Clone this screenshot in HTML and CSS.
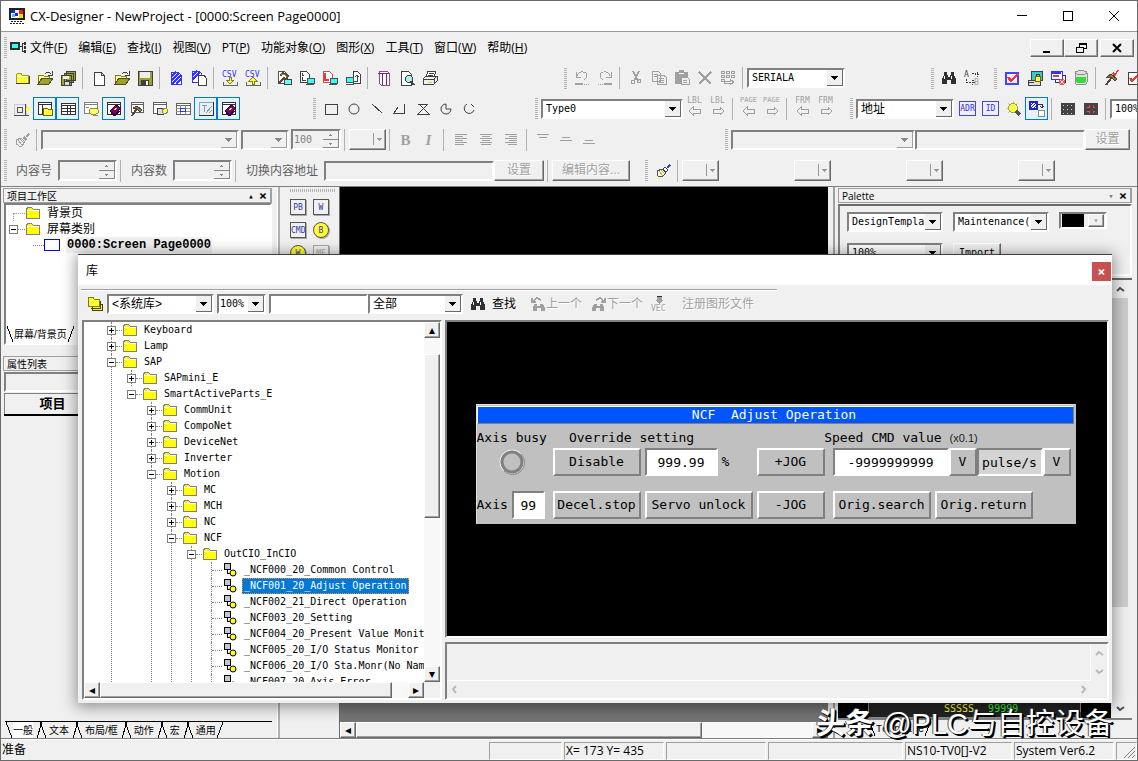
FILE: index.html
```html
<!DOCTYPE html>
<html lang="zh-CN">
<head>
<meta charset="utf-8">
<title>CX-Designer - NewProject</title>
<link rel="stylesheet" href="styles.css">
</head>
<body>
<svg class="defs" aria-hidden="true">
  <symbol id="folder" viewBox="0 0 16 16"><path d="M2 13V5l2-2h3l1 2h6v8z" fill="#ff3" stroke="#999933"/><path d="M3 6h10" stroke="#fff"/><path d="M2 13.500h13V6" fill="none" stroke="#404040"/></symbol>
  <symbol id="open" viewBox="0 0 16 16"><path d="M1 13V5h5l1 1h5v2" fill="#ff9" stroke="#808020"/><path d="M1 14l4-6h11l-4 6z" fill="#a0a030" stroke="#505010"/><path d="M8 4l2-2h2l2 2M15 1v4h-4" fill="none" stroke="#404040"/></symbol>
  <symbol id="saveall" viewBox="0 0 16 16"><path d="M6 1h9v9h-9zM4 3h9v9h-9zM1 5h10v10H1z" fill="#a0a030" stroke="#404040"/><path d="M3 6h6v3H3z" fill="#eee"/><path d="M4 11h5v4H4z" fill="#ddd" stroke="#404040"/></symbol>
  <symbol id="new" viewBox="0 0 16 16"><path d="M3 2h7l3 3v10H3z" fill="#fff" stroke="#404040"/><path d="M10 2v3h3" fill="none" stroke="#404040"/></symbol>
  <symbol id="save" viewBox="0 0 16 16"><path d="M1 1h14v14H1z" fill="#a0a030" stroke="#404040"/><path d="M3 2h10v6H3z" fill="#eee"/><path d="M4 10h8v5H4z" fill="#404040"/><path d="M9 11h2v4H9z" fill="#fff"/></symbol>
  <symbol id="hatch" viewBox="0 0 16 16"><path d="M3 2h7l3 3v9H3z" fill="#fff" stroke="#33f"/><path d="M3 7l5-5M3 11l8-8M4 14l9-9M8 14l5-5" stroke="#33f" stroke-width="1.500"/></symbol>
  <symbol id="hatch2" viewBox="0 0 16 16"><path d="M1 1h7l2 2v9H1z" fill="#fff" stroke="#33f"/><path d="M1 6l5-5M1 10l8-8" stroke="#33f" stroke-width="1.500"/><path d="M7 5h6l2 3v7H7z" fill="#fff" stroke="#404040"/></symbol>
  <symbol id="csvin" viewBox="0 0 16 16"><text x="0" y="7" class="glyph">CSV</text><path d="M7 7h2v3h3l-4 4-4-4h3z" fill="#ff3" stroke="#808020"/><path d="M1 12v3h14v-3" fill="none" stroke="#666"/></symbol>
  <symbol id="csvout" viewBox="0 0 16 16"><text x="0" y="7" class="glyph">CSV</text><path d="M7 14h2v-3h3L8 7l-4 4h3z" fill="#ff3" stroke="#808020"/><path d="M1 12v3h14v-3" fill="none" stroke="#666"/></symbol>
  <symbol id="hammer" viewBox="0 0 16 16"><path d="M2 1h6l3 3v9H2z" fill="#fff" stroke="#505050"/><path d="M8 9h7v5H8z" fill="#6ff" stroke="#404040"/><path d="M4 6l3-3 5 3-2 3-2-1-6 6" fill="none" stroke="#604828" stroke-width="2"/><path d="M5 5l3-1 3 3" fill="none" stroke="#909040"/></symbol>
  <symbol id="trans" viewBox="0 0 16 16"><path d="M1 1h6l3 3v8H1z" fill="#fff" stroke="#404040"/><path d="M3 3v2h2M3 7v3h4" stroke="#404040" fill="none"/><path d="M8 8h7v5H8z" fill="#3ff" stroke="#505050"/><path d="M7 14h8" stroke="#505050"/></symbol>
  <symbol id="transred" viewBox="0 0 16 16"><path d="M1 1h6l3 3v8H1z" fill="#fff" stroke="#c05050"/><path d="M3 3v7h4" stroke="#f33" stroke-width="2" fill="none"/><path d="M8 8h7v5H8z" fill="#3ff" stroke="#505050"/><path d="M7 14h8" stroke="#505050"/></symbol>
  <symbol id="transup" viewBox="0 0 16 16"><path d="M8 1h4l3 3v9H8z" fill="#fff" stroke="#404040"/><path d="M9 11h3V5M10 7l2-2 2 2" stroke="#404040" fill="none"/><path d="M1 7h7v5H1z" fill="#3ff" stroke="#505050"/><path d="M1 14h8" stroke="#505050"/></symbol>
  <symbol id="book" viewBox="0 0 16 16"><path d="M3 3V1h8l2 2v12H5l-2-2z" fill="#fff" stroke="#a040a0"/><path d="M6 3v12M10 3v12M2 3h11" stroke="#703070" fill="none"/></symbol>
  <symbol id="preview" viewBox="0 0 16 16"><path d="M2 1h7l3 3v11H2z" fill="#fff" stroke="#404040"/><circle cx="10" cy="9" r="3.500" fill="#aee" stroke="#404040"/><path d="M12 11l3 4" stroke="#404040" stroke-width="2"/></symbol>
  <symbol id="print" viewBox="0 0 16 16"><path d="M4 7l2-6h8l-2 6z" fill="#fff" stroke="#404040"/><path d="M1 9l3-3h11v5l-3 3H1z" fill="#eee" stroke="#404040"/><path d="M7 3h5M6 5h5M1 9h11l3-3M12 9v5" fill="none" stroke="#404040"/><path d="M6 12h4" stroke="#dd0"/></symbol>
  <symbol id="undo" viewBox="0 0 16 16"><path d="M2 2v5h5M3 6c2-6 10-5 10 0 0 2-2 3-3 4" fill="none" stroke="#a0a0a0"/><path d="M1 14h8" stroke="#a0a0a0" stroke-width="2"/><path d="M10 14h5" stroke="#a0a0a0" stroke-dasharray="1 1"/></symbol>
  <symbol id="redo" viewBox="0 0 16 16"><path d="M14 2v5H9M13 6C11 0 3 1 3 6c0 2 2 3 3 4" fill="none" stroke="#a0a0a0"/><path d="M7 14h8" stroke="#a0a0a0" stroke-width="2"/><path d="M1 14h5" stroke="#a0a0a0" stroke-dasharray="1 1"/></symbol>
  <symbol id="cut" viewBox="0 0 16 16"><path d="M5 1l5 10M11 1L6 11" stroke="#a0a0a0" fill="none" stroke-width="1.500"/><circle cx="5" cy="12" r="2" fill="none" stroke="#a0a0a0"/><circle cx="11" cy="11" r="2" fill="none" stroke="#a0a0a0"/></symbol>
  <symbol id="copy" viewBox="0 0 16 16"><path d="M1 1h6l2 2v8H1zM6 5h6l3 2v7H6z" fill="#eee" stroke="#a0a0a0"/><path d="M3 4h4M3 6h3M8 8h5M8 10h5M8 12h5" stroke="#a0a0a0"/></symbol>
  <symbol id="paste" viewBox="0 0 16 16"><path d="M1 2h4V0h5v2h4v12H1z" fill="#a0a0a0"/><path d="M7 7h6l2 2v5H7z" fill="#eee" stroke="#a0a0a0"/><path d="M9 10h4M9 12h4" stroke="#a0a0a0"/><path d="M5 3h5" stroke="#fff"/></symbol>
  <symbol id="del" viewBox="0 0 16 16"><path d="M2 2l12 12M14 2L2 14" stroke="#a0a0a0" stroke-width="2"/></symbol>
  <symbol id="multi" viewBox="0 0 16 16"><path d="M1 1h3v2H1zM6 1h3v2H6zM11 1h3v2h-3zM1 5h3v2H1zM6 5h3v2H6zM11 5h3v2h-3zM1 9h3v2H1z" fill="none" stroke="#a0a0a0"/><path d="M4 11h6V9l4 3-4 3v-2H4z" fill="#eee" stroke="#a0a0a0"/></symbol>
  <symbol id="find" viewBox="0 0 16 16"><path d="M3 2h3v3h1v2h2V5h1V2h3v3l2 4v5h-5v-4H6v4H1V9l2-4z" fill="#303030"/><path d="M4 6L3 9M11 6l-1 3" stroke="#fff"/></symbol>
  <symbol id="replace" viewBox="0 0 16 16"><text x="0" y="7" class="glyph dark">A</text><text x="10" y="15" class="glyph gray">B</text><path d="M8 3h3M13 3v4M11 5l2-3 2 3M2 9v3h8M8 10l3 2-3 3" stroke="#404040" stroke-dasharray="2 1" fill="none"/></symbol>
  <symbol id="check" viewBox="0 0 16 16"><path d="M2 3h12v11H2z" fill="#eef" stroke="#44f" stroke-width="1.500"/><path d="M4 7l3 4 7-7" stroke="#f33" stroke-width="2.500" fill="none"/></symbol>
  <symbol id="lock" viewBox="0 0 16 16"><path d="M4 1h11v9H4z" fill="#3cc" stroke="#404040"/><path d="M1 10h12v5H1z" fill="#ddd" stroke="#404040"/><path d="M8 6h5v5H8z" fill="#ff3" stroke="#806000"/><path d="M9 6V4h3v2M2 12h5" fill="none" stroke="#404040"/></symbol>
  <symbol id="screens" viewBox="0 0 16 16"><path d="M5 5h10v7H5z" fill="#fff" stroke="#336"/><path d="M1 1h11v8H1z" fill="#fff" stroke="#33f"/><path d="M2 3h9" stroke="#33f" stroke-width="2"/><path d="M3 6h6" stroke="#a4a" stroke-width="2"/><circle cx="12" cy="12" r="3" fill="#f44"/><path d="M10 10l4 4M14 10l-4 4" stroke="#fff"/></symbol>
  <symbol id="db" viewBox="0 0 16 16"><path d="M2 3c0-3 12-3 12 0v9c0 4-12 4-12 0z" fill="#ddd" stroke="#909090"/><path d="M3 7h10v5c-2 2-8 2-10 0z" fill="#3d3"/><path d="M2 3c2 2 10 2 12 0" fill="none" stroke="#909090"/></symbol>
  <symbol id="hammercheck" viewBox="0 0 16 16"><path d="M8 7l-6 8" stroke="#604040" stroke-width="2"/><path d="M3 7l4-3 6 5-2 2-4-4z" fill="#808040" stroke="#504030"/><path d="M9 3l2 2 3-5" stroke="#f33" stroke-width="1.500" fill="none"/></symbol>
  <symbol id="pagecheck" viewBox="0 0 16 16"><path d="M1 2h10v12H1z" fill="#fff" stroke="#404040"/><path d="M3 8l2 3 6-6" stroke="#f33" stroke-width="2" fill="none"/></symbol>
  <symbol id="attr" viewBox="0 0 16 16"><path d="M0 3h12v11H0z" fill="#eee" stroke="#ccc"/><path d="M3 6h5v5H3zM11 3v12M0 14h15" fill="none" stroke="#505050"/><circle cx="14" cy="8" r="2" fill="#ff3"/></symbol>
  <symbol id="wfolder" viewBox="0 0 16 16"><path d="M1 1h13v12H1z" fill="#fff" stroke="#303030"/><path d="M1 3h13M5 3v10" stroke="#303030" fill="none"/><path d="M6 14V7h4l1 1h4v6z" fill="#ff3" stroke="#806000"/></symbol>
  <symbol id="wtable" viewBox="0 0 16 16"><path d="M1 2h14v11H1z" fill="#fff" stroke="#303030"/><path d="M1 4h14M1 7h14M1 10h14M7 4v9M10 4v9" stroke="#303030"/></symbol>
  <symbol id="whand" viewBox="0 0 16 16"><path d="M1 1h13v11H1z" fill="#fff" stroke="#808080"/><path d="M1 3h13M3 6h3" stroke="#808080"/><path d="M6 9l2-2h5l2 2v3l-2 1H8l-2-2z" fill="#ff6" stroke="#909040"/><path d="M10 14h5" stroke="#888"/></symbol>
  <symbol id="wbook" viewBox="0 0 16 16"><path d="M1 1h13v12H1z" fill="#fff" stroke="#303030"/><path d="M1 3h13" stroke="#303030"/><path d="M4 10l6-6 5 3-6 7z" fill="#707" stroke="#303"/><path d="M5 12l4 3 6-6" fill="none" stroke="#303"/><path d="M8 9l3-2" stroke="#ff0"/></symbol>
  <symbol id="whammer" viewBox="0 0 16 16"><path d="M2 1h12v10H2z" fill="#fff" stroke="#606060"/><path d="M2 3h12" stroke="#606060"/><path d="M8 7l-5 8" stroke="#604040" stroke-width="2"/><path d="M4 7l4-2 5 4-2 2-3-3z" fill="#808040" stroke="#504030"/></symbol>
  <symbol id="wobj" viewBox="0 0 16 16"><path d="M1 1h13v11H1z" fill="#fff" stroke="#606060"/><path d="M1 3h13" stroke="#606060"/><path d="M5 7h6v6H5z" fill="#ddd" stroke="#404040"/><circle cx="13" cy="10" r="2.500" fill="#ff3" stroke="#888"/></symbol>
  <symbol id="wgrid" viewBox="0 0 16 16"><path d="M1 2h14v11H1z" fill="#fff" stroke="#606060"/><path d="M1 4h14" stroke="#606060"/><path d="M1 7h14M1 10h14M5 4v9M10 4v9" stroke="#909090"/><path d="M5 7h5v3H5z" fill="none" stroke="#33f"/></symbol>
  <symbol id="wdraft" viewBox="0 0 16 16"><path d="M1 1h14v13H1z" fill="#e6f0f8" stroke="#8aa"/><path d="M15 1v13H1" fill="none" stroke="#303030"/><path d="M4 4h5M6 4v7M8 12l6-7M11 12l3-3" stroke="#89a"/></symbol>
  <symbol id="rect" viewBox="0 0 16 16"><path d="M2.500 3.500h12v10h-12z" fill="none" stroke="#404040"/></symbol>
  <symbol id="ellipse" viewBox="0 0 16 16"><circle cx="8" cy="8" r="5" fill="none" stroke="#404040"/></symbol>
  <symbol id="line" viewBox="0 0 16 16"><path d="M3 3l10 9" stroke="#404040"/></symbol>
  <symbol id="polyline" viewBox="0 0 16 16"><path d="M12 3v9H2l4-6" fill="none" stroke="#404040"/></symbol>
  <symbol id="polygon" viewBox="0 0 16 16"><path d="M3 3h10L3 13h11L4 3" fill="none" stroke="#404040"/></symbol>
  <symbol id="sector" viewBox="0 0 16 16"><path d="M8 3v5h5a5 5 0 1 1-5-5z" fill="none" stroke="#404040"/></symbol>
  <symbol id="arc" viewBox="0 0 16 16"><path d="M6 3a5 5 0 1 0 7 6M10 3l3 3" fill="none" stroke="#404040"/></symbol>
  <symbol id="prev" viewBox="0 0 16 16"><path d="M2 10l4-4v2h7v4H6v2z" fill="none" stroke="#a0a0a0"/></symbol>
  <symbol id="next" viewBox="0 0 16 16"><path d="M14 10l-4-4v2H3v4h7v2z" fill="none" stroke="#a0a0a0"/></symbol>
  <symbol id="bulb" viewBox="0 0 16 16"><circle cx="7" cy="7" r="4.500" fill="#ff3" stroke="#999"/><path d="M10 10l4 4" stroke="#505050" stroke-width="3"/><path d="M0 7h2M7 0v2M2 2l1 1M2 12l1-1M12 2l-1 1" stroke="#dd0"/></symbol>
  <symbol id="swap" viewBox="0 0 16 16"><path d="M1 1h7v7H1z" fill="#fff" stroke="#22c" stroke-width="1.500"/><path d="M1 5l4-4M1 8l7-7M4 8l4-4" stroke="#22c"/><path d="M9 3h4v4M11 5l2 2 2-2" stroke="#303030" fill="none"/><path d="M9 9h6v6H9z" fill="#fff" stroke="#888"/></symbol>
  <symbol id="grid" viewBox="0 0 16 16"><path d="M1 2h14v12H1z" fill="#444"/><path d="M3 4h11M3 8h11M3 12h11" stroke="#ccc" stroke-dasharray="1 3"/></symbol>
  <symbol id="snap" viewBox="0 0 16 16"><path d="M1 2h14v12H1z" fill="#444"/><path d="M4 6h2V4M10 4v2h2M4 10h2v2M10 12v-2h2" stroke="#f44" fill="none"/></symbol>
  <symbol id="brush" viewBox="0 0 16 16"><path d="M2 8l5-2 4 4-4 4-4-1z" fill="#fff8c0" stroke="#505050"/><path d="M8 6l2-2 3 3-2 2z" fill="#fff" stroke="#404040"/><path d="M11 4l3-3 2 1-3 4z" fill="#4444aa"/><path d="M4 8l4 5M6 7l4 4" stroke="#aa9"/><path d="M0 15h6" stroke="#ff3" stroke-dasharray="2 1"/></symbol>
  <symbol id="brushoff" viewBox="0 0 16 16"><path d="M2 8l5-2 4 4-4 5-5-3z" fill="#eee" stroke="#a0a0a0"/><path d="M8 6l2-2 3 3-2 2zM11 4l3-3 2 1-3 4z" fill="#a0a0a0"/><path d="M4 8l4 5M6 7l4 4" stroke="#a0a0a0"/></symbol>
  <symbol id="alignl" viewBox="0 0 16 16"><path d="M2 2.500h12M2 4.500h8M2 6.500h12M2 8.500h8M2 10.500h12M2 12.500h9" stroke="#a0a0a0"/></symbol>
  <symbol id="alignc" viewBox="0 0 16 16"><path d="M2 2.500h12M4 4.500h8M2 6.500h12M4 8.500h8M2 10.500h12M3 12.500h10" stroke="#a0a0a0"/></symbol>
  <symbol id="alignr" viewBox="0 0 16 16"><path d="M2 2.500h12M6 4.500h8M2 6.500h12M6 8.500h8M2 10.500h12M5 12.500h9" stroke="#a0a0a0"/></symbol>
  <symbol id="aligntop" viewBox="0 0 16 16"><path d="M2 2.500h12M4 5.500h8" stroke="#a0a0a0"/></symbol>
  <symbol id="alignmid" viewBox="0 0 16 16"><path d="M4 5.500h8M2 8.500h12" stroke="#a0a0a0"/></symbol>
  <symbol id="alignbot" viewBox="0 0 16 16"><path d="M4 8.500h8M2 11.500h12" stroke="#a0a0a0"/></symbol>
  <symbol id="treefolder" viewBox="0 0 16 16"><path d="M1.500 13.500v-9l1-2h4l2 2h6v9z" fill="#ff0" stroke="#808080"/><path d="M2 5.500h12" stroke="#fff"/></symbol>
  <symbol id="plus" viewBox="0 0 9 9"><path d="M.5.5h8v8h-8z" fill="#fff" stroke="#808080"/><path d="M2 4.500h5M4.500 2v5" stroke="#000"/></symbol>
  <symbol id="minus" viewBox="0 0 9 9"><path d="M.5.5h8v8h-8z" fill="#fff" stroke="#808080"/><path d="M2 4.500h5" stroke="#000"/></symbol>
  <symbol id="part" viewBox="0 0 16 16"><path d="M2.500 1.500h6v6h-6z" fill="#c8c8c8" stroke="#000"/><path d="M5.500 8v3.500h3" fill="none" stroke="#000"/><circle cx="11" cy="11" r="3" fill="#ff0" stroke="#000" shape-rendering="auto"/></symbol>
  <symbol id="page" viewBox="0 0 16 16"><path d="M.5 2.500h15v11H.5z" fill="#fff" stroke="#00f"/></symbol>
  <symbol id="library" viewBox="0 0 16 16"><path d="M5 14V7h4l1 1h5v6z" fill="#ff0" stroke="#404000"/><path d="M1 10V2l1-1h4l1 2h5v7z" fill="#ff3" stroke="#808000"/><path d="M4 12h9V5" fill="none" stroke="#404000"/></symbol>
  <symbol id="findgo" viewBox="0 0 16 16"><path d="M2 2v4h4M3 5l4-3 4 2" fill="none" stroke="#a0a0a0" stroke-width="1.500"/><path d="M4 8h3v2h3V8h3l2 4v3h-4v-3H7v3H3v-3z" fill="#a0a0a0"/></symbol>
  <symbol id="vec" viewBox="0 0 18 16"><path d="M7 1h5v3h2L9 8 5 4h2z" fill="#a0a0a0"/><path d="M7 .500h5" stroke="#303030"/><text x="1" y="15" class="glyph gray">VEC</text></symbol>
  <symbol id="tabstart" viewBox="0 0 8 16"><path d="M1 0l6 16" fill="none" stroke="#000"/></symbol>
  <symbol id="tabmid" viewBox="0 0 16 16"><path d="M9 0L4 16M7 0l6 16" fill="none" stroke="#000"/></symbol>
  <symbol id="tabend" viewBox="0 0 8 16"><path d="M7 0L1 16" fill="none" stroke="#000"/></symbol>
</svg>

<main class="window">
<header class="titlebar">
  <svg class="applogo" viewBox="0 0 16 16"><path d="M0 0h16v12H0z" fill="#222"/><path d="M2 2h12v8H2z" fill="#fff"/><path d="M2 2h4v3H2zM6 5h3v3H6z" fill="#22d"/><path d="M3 6h3v3H3z" fill="#3cf"/><path d="M10 2h4v4h-4z" fill="#e22"/><path d="M10 6h4v4h-4z" fill="#fd0"/><path d="M1 15h14M2 13h12" stroke="#222" stroke-dasharray="2 1"/></svg>
  <h1>CX-Designer - NewProject - [0000:Screen Page0000]</h1>
  <button class="cap" aria-label="Minimize"><svg viewBox="0 0 12 12"><path d="M1 5.500h10" stroke="#000"/></svg></button>
  <button class="cap" aria-label="Maximize"><svg viewBox="0 0 12 12"><path d="M1.500 1.500h9v9h-9z" fill="none" stroke="#000"/></svg></button>
  <button class="cap" aria-label="Close"><svg viewBox="0 0 12 12" class="smooth"><path d="M1 1l10 10M11 1L1 11" stroke="#000"/></svg></button>
</header>

<nav class="menubar">
  <i class="grip"></i>
  <svg class="menuicon" viewBox="0 0 16 16"><path d="M1 3h8v6H1z" fill="#3ff" stroke="#303030" stroke-width="1.500"/><path d="M10 6h2M12 3v9M12 3h2M12 11h2" stroke="#303030"/><path d="M14 2h1v2h-1zM14 6h1v2h-1zM14 10h1v2h-1z" stroke="#303030"/></svg>
  <button>文件(<u>F</u>)</button><button>编辑(<u>E</u>)</button><button>查找(<u>I</u>)</button><button>视图(<u>V</u>)</button><button>PT(<u>P</u>)</button><button>功能对象(<u>O</u>)</button><button>图形(<u>X</u>)</button><button>工具(<u>T</u>)</button><button>窗口(<u>W</u>)</button><button>帮助(<u>H</u>)</button>
  <div class="mdi">
    <button class="raised" aria-label="Minimize page"><svg viewBox="0 0 12 12"><path d="M2 10h7" stroke="#000" stroke-width="2"/></svg></button>
    <button class="raised" aria-label="Restore page"><svg viewBox="0 0 12 12"><path d="M4 1.500h7v5H8M1 5.500h7v5H1zM4 1v4M4 2h7" fill="none" stroke="#000"/></svg></button>
    <button class="raised" aria-label="Close page"><svg viewBox="0 0 12 12" class="smooth"><path d="M2 2l8 8M10 2l-8 8" stroke="#000" stroke-width="2"/></svg></button>
  </div>
</nav>

<section class="bar bar-file">
  <div class="band"><i class="grip"></i>
    <button aria-label="New project"><svg><use href="#folder"/></svg></button><button aria-label="Open project"><svg><use href="#open"/></svg></button><button aria-label="Save all"><svg><use href="#saveall"/></svg></button><i class="sep"></i>
    <button aria-label="New"><svg><use href="#new"/></svg></button><button aria-label="Open"><svg><use href="#open"/></svg></button><button aria-label="Save"><svg><use href="#save"/></svg></button><i class="sep"></i>
    <button aria-label="Pattern"><svg><use href="#hatch"/></svg></button><button aria-label="Pattern page"><svg><use href="#hatch2"/></svg></button><i class="sep"></i>
    <button aria-label="Import CSV"><svg><use href="#csvin"/></svg></button><button aria-label="Export CSV"><svg><use href="#csvout"/></svg></button><i class="sep"></i>
    <button aria-label="Build"><svg><use href="#hammer"/></svg></button><button aria-label="Transfer"><svg><use href="#trans"/></svg></button><button aria-label="Transfer changes"><svg><use href="#transred"/></svg></button><button aria-label="Upload"><svg><use href="#transup"/></svg></button><i class="sep"></i>
    <button aria-label="Report"><svg><use href="#book"/></svg></button><button aria-label="Preview"><svg><use href="#preview"/></svg></button><button aria-label="Print"><svg><use href="#print"/></svg></button>
  </div>
  <div class="band"><i class="grip"></i>
    <button disabled aria-label="Undo"><svg><use href="#undo"/></svg></button><button disabled aria-label="Redo"><svg><use href="#redo"/></svg></button><i class="sep"></i>
    <button disabled aria-label="Cut"><svg><use href="#cut"/></svg></button><button disabled aria-label="Copy"><svg><use href="#copy"/></svg></button><button disabled aria-label="Paste"><svg><use href="#paste"/></svg></button><button disabled aria-label="Delete"><svg><use href="#del"/></svg></button><button disabled aria-label="Duplicate"><svg><use href="#multi"/></svg></button><i class="sep"></i>
    <select class="w98" aria-label="Host"><option>SERIALA</option></select>
  </div>
  <div class="band"><i class="grip"></i>
    <button aria-label="Find"><svg><use href="#find"/></svg></button><button aria-label="Replace"><svg><use href="#replace"/></svg></button>
  </div>
  <div class="band"><i class="grip"></i>
    <button aria-label="Validate"><svg><use href="#check"/></svg></button><button aria-label="Secure"><svg><use href="#lock"/></svg></button><button aria-label="Screens"><svg><use href="#screens"/></svg></button><button aria-label="Memory"><svg><use href="#db"/></svg></button><i class="sep"></i>
    <button aria-label="Check build"><svg><use href="#hammercheck"/></svg></button><button aria-label="Check page"><svg><use href="#pagecheck"/></svg></button>
  </div>
</section>

<section class="bar bar-view">
  <div class="band"><i class="grip"></i>
    <button aria-label="Attribute"><svg><use href="#attr"/></svg></button><button class="on" aria-label="Workspace"><svg><use href="#wfolder"/></svg></button><button class="on" aria-label="Property list"><svg><use href="#wtable"/></svg></button><button aria-label="Operation"><svg><use href="#whand"/></svg></button><button class="on" aria-label="Library"><svg><use href="#wbook"/></svg></button><button aria-label="Output"><svg><use href="#whammer"/></svg></button><button aria-label="Objects"><svg><use href="#wobj"/></svg></button><button aria-label="Table"><svg><use href="#wgrid"/></svg></button><button class="on" aria-label="Draft"><svg><use href="#wdraft"/></svg></button><button class="on" aria-label="Palette"><svg><use href="#wbook"/></svg></button>
  </div>
  <div class="band"><i class="grip"></i>
    <button aria-label="Rectangle"><svg><use href="#rect"/></svg></button><button aria-label="Ellipse"><svg class="smooth"><use href="#ellipse"/></svg></button><button aria-label="Line"><svg><use href="#line"/></svg></button><button aria-label="Polyline"><svg><use href="#polyline"/></svg></button><button aria-label="Polygon"><svg><use href="#polygon"/></svg></button><button aria-label="Sector"><svg class="smooth"><use href="#sector"/></svg></button><button aria-label="Arc"><svg class="smooth"><use href="#arc"/></svg></button>
  </div>
  <div class="band"><i class="grip"></i>
    <select class="w142" aria-label="Type"><option>Type0</option></select>
    <button disabled class="nav"><span>LBL</span><svg><use href="#prev"/></svg></button><button disabled class="nav"><span>LBL</span><svg><use href="#next"/></svg></button><i class="sep"></i>
    <button disabled class="nav page"><span>PAGE</span><svg><use href="#prev"/></svg></button><button disabled class="nav page"><span>PAGE</span><svg><use href="#next"/></svg></button><i class="sep"></i>
    <button disabled class="nav"><span>FRM</span><svg><use href="#prev"/></svg></button><button disabled class="nav"><span>FRM</span><svg><use href="#next"/></svg></button>
  </div>
  <div class="band"><i class="grip"></i>
    <select class="w98 cjk" aria-label="Address"><option>地址</option></select>
    <button class="tagbtn"><b>ADR</b></button><button class="tagbtn"><b>ID</b></button><button aria-label="Light"><svg><use href="#bulb"/></svg></button><button class="on" aria-label="Swap"><svg><use href="#swap"/></svg></button><i class="sep"></i>
    <button aria-label="Grid"><svg><use href="#grid"/></svg></button><button aria-label="Snap"><svg><use href="#snap"/></svg></button><i class="sep"></i>
    <select class="w98" aria-label="Zoom"><option>100%</option></select>
  </div>
</section>

<section class="bar bar-text">
  <div class="band"><i class="grip"></i>
    <button disabled aria-label="Format painter"><svg><use href="#brushoff"/></svg></button><i class="sep"></i>
    <select disabled class="w198" aria-label="Font"></select><select disabled class="w48" aria-label="Size"></select>
    <span class="spin w48"><input disabled value="100" aria-label="Scale"><i></i></span><i class="sep"></i>
    <button disabled class="raised pick" aria-label="Text color"></button><i class="sep"></i>
    <button disabled class="bold">B</button><button disabled class="bold ital">I</button><i class="sep"></i>
    <div class="aligns"><button disabled aria-label="Left"><svg><use href="#alignl"/></svg></button><button disabled aria-label="Center"><svg><use href="#alignc"/></svg></button><button disabled aria-label="Right"><svg><use href="#alignr"/></svg></button></div><i class="sep"></i>
    <button disabled aria-label="Top"><svg><use href="#aligntop"/></svg></button><button disabled aria-label="Middle"><svg><use href="#alignmid"/></svg></button><button disabled aria-label="Bottom"><svg><use href="#alignbot"/></svg></button>
  </div>
  <div class="band grow"><i class="grip"></i>
    <select disabled class="w184" aria-label="Label"></select><input disabled class="fill" aria-label="Label text"><button disabled class="raised txt">设置</button>
  </div>
</section>

<section class="bar bar-content">
  <div class="band"><i class="grip"></i>
    <label for="cno">内容号</label><span class="spin"><input disabled id="cno"><i></i></span><i class="sep"></i>
    <label for="cnt">内容数</label><span class="spin"><input disabled id="cnt"><i></i></span><i class="sep"></i>
    <label for="adr">切换内容地址</label><input disabled class="w170" id="adr"><button disabled class="raised txt">设置</button><i class="sep"></i>
    <button disabled class="raised txt wide">编辑内容...</button>
  </div>
  <div class="band"><i class="grip"></i>
    <button aria-label="Painter"><svg><use href="#brush"/></svg></button><i class="sep"></i>
    <div class="picks"><button disabled class="raised pick" aria-label="Color 1"></button><button disabled class="raised pick" aria-label="Color 2"></button><button disabled class="raised pick" aria-label="Color 3"></button><button disabled class="raised pick" aria-label="Color 4"></button></div>
  </div>
</section>

<div class="workspace">
  <aside class="left">
    <div class="panelhead"><span>项目工作区</span><button aria-label="Collapse">▴</button><button class="x" aria-label="Close panel">×</button></div>
    <div class="sunken project">
      <ul>
        <li><i class="stub"></i><svg><use href="#treefolder"/></svg>背景页</li>
        <li><svg class="box"><use href="#minus"/></svg><i class="dots"></i><svg><use href="#treefolder"/></svg>屏幕类别</li>
        <li class="pageitem"><i class="dots"></i><svg><use href="#page"/></svg><b>0000:Screen Page0000</b></li>
      </ul>
      <div class="tabs"><svg class="te"><use href="#tabstart"/></svg><button>屏幕/背景页</button><svg class="te"><use href="#tabend"/></svg></div>
    </div>
    <div class="panelhead second"><span>属性列表</span></div>
    <div class="sunken objname"></div>
    <table class="props"><thead><tr><th>项目</th><th>值</th></tr></thead></table>
    <div class="tabs bottomtabs"><svg class="te"><use href="#tabstart"/></svg><button class="sel">一般</button><svg class="tm"><use href="#tabmid"/></svg><button>文本</button><svg class="tm"><use href="#tabmid"/></svg><button>布局/框</button><svg class="tm"><use href="#tabmid"/></svg><button>动作</button><svg class="tm"><use href="#tabmid"/></svg><button>宏</button><svg class="tm"><use href="#tabmid"/></svg><button>通用</button><svg class="te"><use href="#tabend"/></svg></div>
  </aside>

  <aside class="toolbox">
    <i class="hgrip"></i>
    <button>PB</button><button>W</button><button>CMD</button><button class="round">B</button><button class="round">W</button><button class="dim">MF</button>
  </aside>

  <section class="canvas">
    <div class="screen"></div>
    <div class="hscroll"><button class="raised arrow">◂</button><i class="raised thumb wide"></i><i class="track"></i><button class="raised arrow">▸</button></div>
  </section>

  <aside class="palette">
    <div class="panelhead"><span>Palette</span><button class="pale" aria-label="Collapse palette">▾</button><button class="x" aria-label="Close palette">×</button></div>
    <div class="palettetop">
      <select aria-label="Template"><option>DesignTempla</option></select>
      <select aria-label="Category"><option>Maintenance(</option></select>
      <span class="swatch"><i></i><button disabled class="raised" aria-label="Background">▾</button></span>
      <select aria-label="Palette zoom"><option>100%</option></select>
      <button class="raised import">Import</button>
    </div>
    <div class="palettebody">
      <div class="thumbs"><div class="strip"><span class="y">SSSSS</span><span class="g">99999</span></div></div>
      <div class="vflat"><svg viewBox="0 0 9 6"><path d="M1 5l3-3 4 3" fill="none" stroke="#505050" stroke-width="2"/></svg><i></i><svg viewBox="0 0 9 6"><path d="M1 1l3 3 4-3" fill="none" stroke="#505050" stroke-width="2"/></svg></div>
    </div>
    <div class="tabs palettetabs"><svg class="te"><use href="#tabstart"/></svg><button>Template</button><svg class="te"><use href="#tabend"/></svg></div>
  </aside>
</div>

<footer class="status"><span class="ready">准备</span><span></span><span>X= 173 Y= 435</span><span></span><span></span><span>NS10-TV0[]-V2</span><span>System Ver6.2</span><span><svg viewBox="0 0 12 12"><path d="M1 12L12 1M5 12l7-7M9 12l3-3" stroke="#808080"/></svg></span></footer>

<section class="dialog" role="dialog" aria-label="库">
  <header><h2>库</h2><button aria-label="Close library">×</button></header>
  <div class="dialogbody">
    <div class="libbar">
      <svg><use href="#library"/></svg>
      <select class="cjk w107" aria-label="Library"><option>&lt;系统库&gt;</option></select>
      <select class="w48" aria-label="Scale"><option>100%</option></select>
      <input class="w98" aria-label="Search text"><select class="cjk w95" aria-label="Scope"><option>全部</option></select>
      <button class="strong"><svg><use href="#find"/></svg>查找</button>
      <button disabled class="tightbtn"><svg><use href="#findgo"/></svg>上一个</button>
      <button disabled class="tightbtn"><svg class="flip"><use href="#findgo"/></svg>下一个</button>
      <button disabled class="last"><svg class="wide"><use href="#vec"/></svg>注册图形文件</button>
    </div>
    <div class="split">
      <div class="sunken treebox">
        <div class="treeview">
        <ul class="tree">
          <li><div><svg class="box"><use href="#plus"/></svg><i class="dots"></i><svg><use href="#treefolder"/></svg>Keyboard</div></li>
          <li><div><svg class="box"><use href="#plus"/></svg><i class="dots"></i><svg><use href="#treefolder"/></svg>Lamp</div></li>
          <li><div><svg class="box"><use href="#minus"/></svg><i class="dots"></i><svg><use href="#treefolder"/></svg>SAP</div>
            <ul>
              <li><div><svg class="box"><use href="#plus"/></svg><i class="dots"></i><svg><use href="#treefolder"/></svg>SAPmini_E</div></li>
              <li class="end"><div><svg class="box"><use href="#minus"/></svg><i class="dots"></i><svg><use href="#treefolder"/></svg>SmartActiveParts_E</div>
                <ul>
                  <li><div><svg class="box"><use href="#plus"/></svg><i class="dots"></i><svg><use href="#treefolder"/></svg>CommUnit</div></li>
                  <li><div><svg class="box"><use href="#plus"/></svg><i class="dots"></i><svg><use href="#treefolder"/></svg>CompoNet</div></li>
                  <li><div><svg class="box"><use href="#plus"/></svg><i class="dots"></i><svg><use href="#treefolder"/></svg>DeviceNet</div></li>
                  <li><div><svg class="box"><use href="#plus"/></svg><i class="dots"></i><svg><use href="#treefolder"/></svg>Inverter</div></li>
                  <li><div><svg class="box"><use href="#minus"/></svg><i class="dots"></i><svg><use href="#treefolder"/></svg>Motion</div>
                    <ul>
                      <li><div><svg class="box"><use href="#plus"/></svg><i class="dots"></i><svg><use href="#treefolder"/></svg>MC</div></li>
                      <li><div><svg class="box"><use href="#plus"/></svg><i class="dots"></i><svg><use href="#treefolder"/></svg>MCH</div></li>
                      <li><div><svg class="box"><use href="#plus"/></svg><i class="dots"></i><svg><use href="#treefolder"/></svg>NC</div></li>
                      <li><div><svg class="box"><use href="#minus"/></svg><i class="dots"></i><svg><use href="#treefolder"/></svg>NCF</div>
                        <ul>
                          <li><div><svg class="box"><use href="#minus"/></svg><i class="dots"></i><svg><use href="#treefolder"/></svg>OutCIO_InCIO</div>
                            <ul class="leaves">
                              <li><i class="dots"></i><svg><use href="#part"/></svg><span>_NCF000_20_Common Control</span></li>
                              <li><i class="dots"></i><svg><use href="#part"/></svg><span class="selected">_NCF001_20_Adjust Operation</span></li>
                              <li><i class="dots"></i><svg><use href="#part"/></svg><span>_NCF002_21_Direct Operation</span></li>
                              <li><i class="dots"></i><svg><use href="#part"/></svg><span>_NCF003_20_Setting</span></li>
                              <li><i class="dots"></i><svg><use href="#part"/></svg><span>_NCF004_20_Present Value Monit</span></li>
                              <li><i class="dots"></i><svg><use href="#part"/></svg><span>_NCF005_20_I/O Status Monitor</span></li>
                              <li><i class="dots"></i><svg><use href="#part"/></svg><span>_NCF006_20_I/O Sta.Monr(No Nam</span></li>
                              <li><i class="dots"></i><svg><use href="#part"/></svg><span>_NCF007_20_Axis Error</span></li>
                            </ul>
                          </li>
                        </ul>
                      </li>
                    </ul>
                  </li>
                </ul>
              </li>
            </ul>
          </li>
        </ul>
        </div>
        <div class="vscroll"><button class="raised arrow">▴</button><i class="track gap"></i><i class="raised vthumb"></i><i class="track"></i><button class="raised arrow">▾</button></div>
        <div class="hscroll"><button class="raised arrow">◂</button><i class="raised thumb"></i><i class="track"></i><button class="raised arrow">▸</button></div>
        <i class="corner"></i>
      </div>
      <div class="rightpane">
        <div class="sunken stage">
          <div class="hmi">
            <div class="hmititle">NCF&nbsp; Adjust Operation</div>
            <div class="hmirow labels"><span>Axis busy</span><span class="ov">Override setting</span><span class="sp">Speed CMD value</span><small>(x0.1)</small></div>
            <div class="hmirow">
              <span class="lampcell"><svg viewBox="0 0 26 26"><circle cx="13" cy="13" r="12" fill="none" stroke="#fff"/><circle cx="13" cy="13" r="10" fill="#c0c0c0" stroke="#808080" stroke-width="3"/><path d="M5 22a12 12 0 0 0 17-17" fill="none" stroke="#808080"/></svg></span>
              <button>Disable</button><span class="numcell"><input value="999.99" aria-label="Override"><em>%</em></span><button class="jog">+JOG</button>
              <span class="group"><input class="big" value="-9999999999" aria-label="Speed CMD value"><button>V</button><input class="unit" value="pulse/s" aria-label="Unit"><button>V</button></span>
            </div>
            <div class="hmirow">
              <label class="axis">Axis<input value="99"></label>
              <button>Decel.stop</button><button class="servo">Servo unlock</button><button class="jog">-JOG</button>
              <span class="group spaced"><button>Orig.search</button><button>Orig.return</button></span>
            </div>
          </div>
        </div>
        <div class="sunken note">
          <div class="notetext"></div>
          <div class="notev"><svg viewBox="0 0 9 6"><path d="M1 5l3-3 4 3" fill="none" stroke="#b8b8b8" stroke-width="2"/></svg><svg viewBox="0 0 9 6"><path d="M1 1l3 3 4-3" fill="none" stroke="#b8b8b8" stroke-width="2"/></svg></div>
          <div class="noteh"><svg viewBox="0 0 6 9"><path d="M5 1L2 4l3 4" fill="none" stroke="#b8b8b8" stroke-width="2"/></svg><svg viewBox="0 0 6 9"><path d="M1 1l3 3-3 4" fill="none" stroke="#b8b8b8" stroke-width="2"/></svg></div>
        </div>
      </div>
    </div>
  </div>
</section>
<div class="watermark"><b>头条</b> @PLC与自控设备</div>
</main>
</body>
</html>
```
FILE: styles.css
```css
:root {
  --mono: "DejaVu Sans Mono", "Noto Sans CJK SC", monospace;
  --ui: "Open Sans", "Noto Sans CJK SC", sans-serif;
  --cjk: "Liberation Sans", "Noto Sans CJK SC", sans-serif;
}
* { box-sizing: border-box; }
body { margin: 0; background: #f0f0f0; font: 12px/16px var(--ui); color: #000; }
button, input, select { font: inherit; color: inherit; margin: 0; padding: 0; border: 0; border-radius: 0; background: none; outline: 0; }
ul { margin: 0; padding: 0; list-style: none; }
svg { display: block; width: 16px; height: 16px; flex: none; shape-rendering: crispEdges; }
.smooth { shape-rendering: auto; }
.defs { position: absolute; width: 0; height: 0; }
.glyph { font: 8px var(--mono); fill: #33f; }
.glyph.dark { fill: #404040; }
.glyph.gray { fill: #a0a0a0; }

.window { position: relative; display: flex; flex-direction: column; height: 100vh; overflow: hidden; border: 1px solid #696969; }
.titlebar { display: flex; align-items: center; height: 31px; flex: none; background: #fff; border-bottom: 1px solid #999; padding-left: 8px; }
.titlebar h1 { font: 13px/16px var(--ui); margin: 0 auto 0 5px; }
.cap { width: 46px; height: 30px; display: grid; place-items: center; }
.cap svg { width: 12px; height: 12px; }

.grip { width: 3px; height: 21px; flex: none; margin: 0 3px; background: repeating-linear-gradient(#b4b4b4 0 1px, #f0f0f0 1px 2px); }
.sep { width: 8px; height: 22px; flex: none; background: linear-gradient(#b0b0b0, #b0b0b0) 3px 0 / 1px 100% no-repeat; }

.menubar { display: flex; align-items: center; height: 31px; flex: none; }
.menubar > button { padding: 0 6px 0 5px; height: 22px; white-space: nowrap; }
.menubar > .menuicon + button { padding-left: 4px; }
.mdi { display: flex; margin-left: auto; padding-right: 3px; }
.mdi button { width: 34px; height: 18px; display: grid; place-items: center; }
.mdi button:last-child { margin-left: 2px; }
.mdi svg { width: 12px; height: 12px; }

.raised { background: #f0f0f0; border: 1px solid; border-color: #fff #696969 #696969 #fff; box-shadow: inset -1px -1px #a0a0a0; }
.sunken { border: 2px solid; border-color: #808080 #fff #fff #808080; }

.bar { display: grid; height: 31px; flex: none; align-items: center; overflow: hidden; white-space: nowrap; }
.bar-file { grid-template-columns: 560px 367px 63px 1fr; height: 30px; }
.bar-view { grid-template-columns: 309px 222px 315px 1fr; }
.bar-text { grid-template-columns: 721px 1fr; }
.bar-content { grid-template-columns: 641px 1fr; }
.band { display: flex; align-items: center; min-width: 0; height: 23px; }
.band button:not(.raised) { width: 23px; height: 23px; flex: none; display: grid; place-items: center; }
.band > button.on { border: 1px solid #0078d7; background: #e5f1fb; }
.aligns { display: flex; gap: 2px; padding: 0 1px; }

select, .band input, .libbar input {
  appearance: none; height: 20px; flex: none; padding: 0 16px 0 3px; border: 2px solid; border-color: #808080 #fff #fff #808080;
  background: #fff url("data:image/svg+xml,%3Csvg xmlns='http://www.w3.org/2000/svg' width='16' height='16' shape-rendering='crispEdges'%3E%3Cpath d='M0 0h16v16H0z' fill='%23696969'/%3E%3Cpath d='M0 0h15v15H0z' fill='%23f0f0f0'/%3E%3Cpath d='M4 6h7v1H4zM5 7h5v1H5zM6 8h3v1H6zM7 9h1v1H7z'/%3E%3C/svg%3E") right top no-repeat;
  font: 10px/16px var(--mono);
}
select:disabled, .band input:disabled { opacity: 1; background-color: #f0f0f0; color: #808080; }
select:disabled { background-image: url("data:image/svg+xml,%3Csvg xmlns='http://www.w3.org/2000/svg' width='16' height='16' shape-rendering='crispEdges'%3E%3Cpath d='M0 0h16v16H0z' fill='%23a0a0a0'/%3E%3Cpath d='M0 0h15v15H0z' fill='%23f0f0f0'/%3E%3Cpath d='M4 6h7v1H4zM5 7h5v1H5zM6 8h3v1H6zM7 9h1v1H7z' fill='%23888'/%3E%3C/svg%3E"); }
.band input, .libbar input { background-image: none; padding-right: 2px; }
select.cjk { font: 12px/16px var(--cjk); }
.w48 { width: 48px; } .w95 { width: 95px; } .w98 { width: 98px; } .w107 { width: 107px; }
.w142 { width: 142px; } .w170 { width: 170px; } .w184 { width: 184px; } .w198 { width: 198px; }
select.w48 { padding-left: 1px; }
.bar-text select { margin-right: 2px; }
.bar-text .w184 { margin-right: 0; }

.band > button.nav { display: flex; flex-direction: column; align-items: center; justify-content: flex-start; }
.nav span { font: 8px/7px var(--mono); color: #a0a0a0; }
.nav.page span { font-size: 7px; }
.nav svg { margin-top: -3px; }
.tagbtn b { display: block; width: 17px; height: 15px; border: 1px solid #44f; font: 8px/13px var(--mono); color: #33f; text-align: center; overflow: hidden; }
.bar-view .w98.cjk { margin-right: 2px; }

.spin { display: flex; width: 59px; height: 21px; border: 2px solid; border-color: #808080 #fff #fff #808080; }
.spin.w48 { width: 50px; }
.spin input { flex: 1; width: 0; height: 17px; border: 0; padding: 0 1px; }
.spin i { width: 16px; background: url("data:image/svg+xml,%3Csvg xmlns='http://www.w3.org/2000/svg' width='16' height='17' shape-rendering='crispEdges'%3E%3Cpath d='M0 8h15V0M0 16h15V9' fill='none' stroke='%23888'/%3E%3Cpath d='M7 3h1v1H7zM6 4h3v1H6zM6 12h3v1H6zM7 13h1v1H7z' fill='%23888'/%3E%3C/svg%3E"); }
.pick { width: 37px; height: 21px; flex: none; background: #f0f0f0 url("data:image/svg+xml,%3Csvg xmlns='http://www.w3.org/2000/svg' width='11' height='17' shape-rendering='crispEdges'%3E%3Cpath d='M0 3h1v12H0zM4 8h5v1H4zM5 9h3v1H5zM6 10h1v1H6z' fill='%23999'/%3E%3C/svg%3E") right 1px top 0 no-repeat; }
.txt { width: 50px; height: 21px; flex: none; color: #a0a0a0; text-shadow: 1px 1px #fff; font: 12px/17px var(--cjk); }
.txt.wide { width: 78px; }
.band > .bold { color: #a0a0a0; font: bold 15px/20px "Liberation Serif", serif; }
.band > .ital { font-style: italic; }
.band .fill { flex: 1; min-width: 0; height: 20px; }
.grow .txt { width: 45px; margin-right: 7px; }
.bar label { padding: 0 6px; color: #606060; font: 12px/16px var(--cjk); }
.picks { display: flex; gap: 75px; }

.workspace { flex: 1; min-height: 0; display: grid; grid-template-columns: 277px 61px 1fr 304px; border-top: 1px solid #808080; border-bottom: 1px solid #808080; }
.left { display: flex; flex-direction: column; min-height: 0; padding: 1px 5px 0 2px; border-right: 1px solid #fff; }
.panelhead { display: flex; align-items: center; height: 15px; flex: none; border: 1px solid #a0a0a0; border-width: 1px 2px 1px 1px; padding: 0 1px 0 3px; font: 10px/12px var(--ui); }
.panelhead span { margin-right: auto; }
.panelhead button { width: 12px; height: 12px; font: 9px/12px var(--mono); }
.panelhead button.x { font: bold 13px/12px var(--mono); }
.panelhead .pale { color: #808080; }
.project { display: flex; flex-direction: column; height: 142px; flex: none; margin-left: 1px; background: #fff; }
.project li { display: flex; align-items: center; height: 16px; padding-left: 3px; font: 12px/16px var(--cjk); }
.project li svg:not(.box) { margin-right: 6px; }
.stub { width: 12px; height: 8px; margin: 8px 0 0 4px; border: 1px dotted #999; border-width: 1px 0 0 1px; }
.box { width: 9px; height: 9px; }
.dots { width: 8px; border-top: 1px dotted #808080; flex: none; }
.project .dots { width: 7px; }
.project .pageitem { padding-left: 27px; }
.pageitem .dots { width: 11px; }
.project .pageitem svg { margin-right: 4px; }
.pageitem b { font: bold 12px/16px "Liberation Mono", monospace; background: #f0f0f0; padding: 0 1px; }
.tabs { display: flex; height: 17px; flex: none; }
.tabs button { font: 10px/15px var(--cjk); white-space: nowrap; }
.tabs .te { width: 8px; }
.tabs .tm { width: 16px; }
.project .tabs { margin-top: auto; }
.second { margin-top: 11px; }
.objname { height: 20px; flex: none; margin: 1px 0 0 1px; }
.props { display: table; table-layout: fixed; flex: none; height: 23px; margin: 1px 0 0 1px; border-collapse: collapse; width: 267px; border-top: 1px solid #808080; }
.props th { height: 21px; padding: 0; text-align: center; border-bottom: 2px solid #000; border-left: 1px solid #808080; font: bold 13px/18px var(--cjk); }
.props th:first-child { width: 96px; }
.bottomtabs { margin: auto 0 0 2px; border-top: 1px solid #000; }
.bottomtabs .sel { background: #fff; }

.toolbox { display: grid; grid-template-columns: 16px 16px; gap: 7px; align-content: start; padding: 2px 10px; border-left: 2px solid #b0b0b0; }
.hgrip { grid-column: 1 / 3; height: 3px; width: 45px; background: repeating-linear-gradient(90deg, #b4b4b4 0 1px, #f0f0f0 1px 2px); }
.toolbox button { width: 16px; height: 16px; border: 1px solid #555; box-shadow: 1px 1px #aaa; color: #33a; font: 8px/13px var(--mono); overflow: hidden; }
.toolbox .round { border-radius: 50%; background: #ff3; }
.toolbox .dim { color: #aaa; border-color: #aaa; }

.canvas { display: flex; flex-direction: column; min-width: 0; background: #747474; border-left: 1px solid #696969; border-right: 5px solid #f0f0f0; }
.screen { background: #000; height: 70px; }
.canvas .hscroll { margin-top: auto; }
.hscroll { display: flex; height: 16px; }
.arrow { width: 16px; height: 16px; flex: none; font: 12px/12px "DejaVu Sans", sans-serif; display: grid; place-items: center; }
.thumb { width: 292px; }
.thumb.wide { width: 346px; }
.track { flex: 1; background: #f8f8f8; }
.corner { background: #f0f0f0; }

.palette { display: flex; flex-direction: column; min-width: 0; padding: 1px 5px 0 3px; border-left: 2px solid #a0a0a0; }
.palettetop { display: grid; grid-template-columns: 96px 96px 48px; gap: 11px 10px; align-content: start; justify-content: start; height: 72px; flex: none; overflow: hidden; padding: 6px 0 0 7px; margin-top: 1px; border: 2px solid; border-color: #696969 #fff #fff #808080; }
.palettetop select { width: 96px; }
.swatch { display: flex; height: 17px; border: 2px solid; border-color: #808080 #fff #fff #808080; }
.swatch i { width: 22px; margin: 0 4px 0 1px; background: #000; }
.swatch button { width: 16px; color: #999; font: 8px/8px var(--mono); }
.import { width: 48px; height: 20px; font: 10px/16px var(--mono); }
.palettebody { flex: 1; min-height: 0; display: flex; margin-top: 2px; border-top: 2px solid #696969; border-bottom: 2px solid #808080; }
.thumbs { flex: 1; display: flex; align-items: flex-end; background: #000; }
.strip { flex: 1; height: 16px; margin: 0 30px; background: #222; border: 1px solid #888; font: 10px/12px var(--mono); padding-left: 75px; }
.y { color: #ff3; } .g { color: #3e3; margin-left: 14px; }
.vflat { display: flex; flex-direction: column; align-items: center; width: 18px; padding: 6px 0; margin-right: 3px; }
.vflat svg { width: 9px; height: 6px; shape-rendering: auto; }
.vflat i { width: 16px; height: 309px; margin: 6px 0 auto; background: #cdcdcd; }
.palettetabs { margin-left: 30px; height: 18px; }
.palettetabs button { font: 10px/15px "Liberation Mono", monospace; }

.status { display: grid; grid-template-columns: 1fr 73px 100px 100px 135px 107px 100px 21px; gap: 2px; height: 21px; flex: none; border-top: 1px solid #fff; padding-top: 2px; }
.status span { border: 1px solid; border-color: #a0a0a0 #fff #fff #a0a0a0; padding-left: 1px; line-height: 15px; white-space: nowrap; }
.status .ready { border: 0; }
.status svg { margin: 3px 0 0 5px; width: 12px; height: 12px; shape-rendering: auto; }

.dialog { position: absolute; left: 77px; top: 253px; right: 25px; bottom: 57px; display: flex; flex-direction: column; background: #f0f0f0; border-top: 1px solid #404040; box-shadow: 0 2px 14px 2px rgba(0, 0, 0, .4); }
.dialog > header { display: flex; justify-content: space-between; align-items: center; height: 30px; flex: none; background: #fff; padding: 2px 1px 0 8px; }
.dialog h2 { margin: 0; font: 12px/16px var(--cjk); }
.dialog header button { width: 19px; height: 19px; background: #c75050; color: #fff; font: bold 13px/17px var(--mono); }
.dialogbody { flex: 1; min-height: 0; display: flex; flex-direction: column; padding: 4px 3px 3px 4px; }
.libbar { display: flex; align-items: center; height: 31px; flex: none; width: 696px; margin-left: -1px; border-top: 1px solid #a0a0a0; box-shadow: inset 0 1px #fff; padding: 0 0 2px 6px; white-space: nowrap; }
.libbar > svg { margin-right: 4px; }
.libbar .w107 { margin-right: 3px; }
.libbar select.w48 { width: 49px; margin-right: 3px; }
.libbar .w98 { width: 99px; }
.libbar button { display: flex; align-items: center; gap: 6px; margin-left: 7px; font: 12px/16px var(--cjk); }
.libbar button:disabled { color: #a0a0a0; text-shadow: 1px 1px #fff; }
.libbar .tightbtn { gap: 0; margin-left: 9px; }
.libbar .strong + .tightbtn { margin-left: 14px; }
.libbar .last { gap: 14px; }
.libbar svg.wide { width: 18px; }
.flip { transform: scaleX(-1); }
.split { flex: 1; min-height: 0; display: grid; grid-template-columns: 360px 1fr; gap: 3px; }
.treebox { display: grid; grid-template-columns: 1fr 16px; grid-template-rows: minmax(0, 1fr) 16px; background: #fff; min-height: 0; }
.treeview { overflow: hidden; padding-left: 27px; background: #fff; }
.vscroll { display: flex; flex-direction: column; min-height: 0; }
.vscroll .gap { flex: 0 0 16px; }
.vthumb { height: 164px; flex: none; }
.tree { font: 10px/16px var(--mono); white-space: nowrap; }
.tree ul { margin-left: 19px; }
.tree li { border-left: 1px dotted #808080; }
.tree li.end { border-left-color: transparent; }
.tree li > div { display: flex; align-items: center; height: 16px; margin-left: -5px; }
.tree div > svg:not(.box) { margin-right: 6px; }
.tree div > .dots { width: 6px; }
.leaves li { display: flex; align-items: center; height: 16px; }
.leaves .dots { width: 10px; }
.leaves svg { margin-right: 4px; }
.leaves span { padding: 0 2px; height: 16px; line-height: 15px; }
.leaves .selected { background: #0078d7; color: #fff; outline: 1px dotted #ff8728; outline-offset: -1px; }

.rightpane { display: grid; grid-template-rows: 1fr 58px; gap: 4px; min-width: 0; min-height: 0; }
.stage { background: #000; display: grid; place-items: center; padding: 0 3px 30px 0; min-height: 0; overflow: hidden; }
.hmi { width: 600px; background: #c0c0c0; font: 13px/18px var(--mono); padding: 1px 1px 1px 0; border: 1px solid; border-color: #e0e0e0 #c0c0c0 #c0c0c0 #e0e0e0; }
.hmititle { height: 18px; background: #05f; color: #fff; text-align: center; line-height: 16px; border: 1px solid; border-color: #fff #808080 #808080 #fff; padding-right: 2px; }
.hmirow { display: grid; grid-template-columns: 76px 92px 112px 76px 1fr; align-items: center; height: 28px; margin-bottom: 15px; }
.hmirow.labels { display: flex; height: 20px; margin: 4px 0 0; }
.labels .ov { margin-left: 22px; }
.labels .sp { margin-left: 130px; }
.labels small { margin-left: 8px; font: 11px/18px "Liberation Sans", sans-serif; color: #222; }
.hmirow:last-child { margin-bottom: 3px; }
.hmi button { width: 88px; height: 28px; border: 2px solid; border-color: #fff #808080 #808080 #fff; }
.hmi .servo { width: 108px; }
.hmi .jog { width: 68px; }
.hmi input { height: 28px; background: #fff; border: 2px solid; border-color: #808080 #fff #fff #808080; text-align: center; }
.lampcell { padding-left: 22px; }
.lampcell svg { width: 26px; height: 26px; shape-rendering: auto; }
.numcell { display: flex; align-items: center; }
.numcell input { width: 73px; }
.numcell em { font-style: normal; margin-left: 4px; }
.group { display: flex; align-items: center; }
.group.spaced { gap: 4px; }
.group button { width: 28px; }
.group.spaced button { width: 98px; }
.hmi .big { width: 116px; }
.hmi .unit { width: 66px; background: #d4d4d4; }
.axis { display: flex; align-items: center; gap: 4px; }
.axis input { width: 33px; }
.note { display: grid; grid-template-columns: 1fr 16px; grid-template-rows: 1fr 17px; }
.notetext { border: 1px solid #fff; border-width: 0 1px 1px 0; }
.notev, .noteh { display: flex; justify-content: space-between; align-items: center; padding: 6px 3px; }
.notev { flex-direction: column; }
.noteh { padding: 0 4px; }
.notev svg { width: 9px; height: 6px; shape-rendering: auto; }
.noteh svg { width: 6px; height: 9px; shape-rendering: auto; }

.watermark { position: absolute; right: 24px; bottom: 18px; color: #fff; font: 29px/36px var(--cjk); white-space: nowrap; text-shadow: 1px 1px #000, 2px 2px #000, -1px 0 #555; }
```
